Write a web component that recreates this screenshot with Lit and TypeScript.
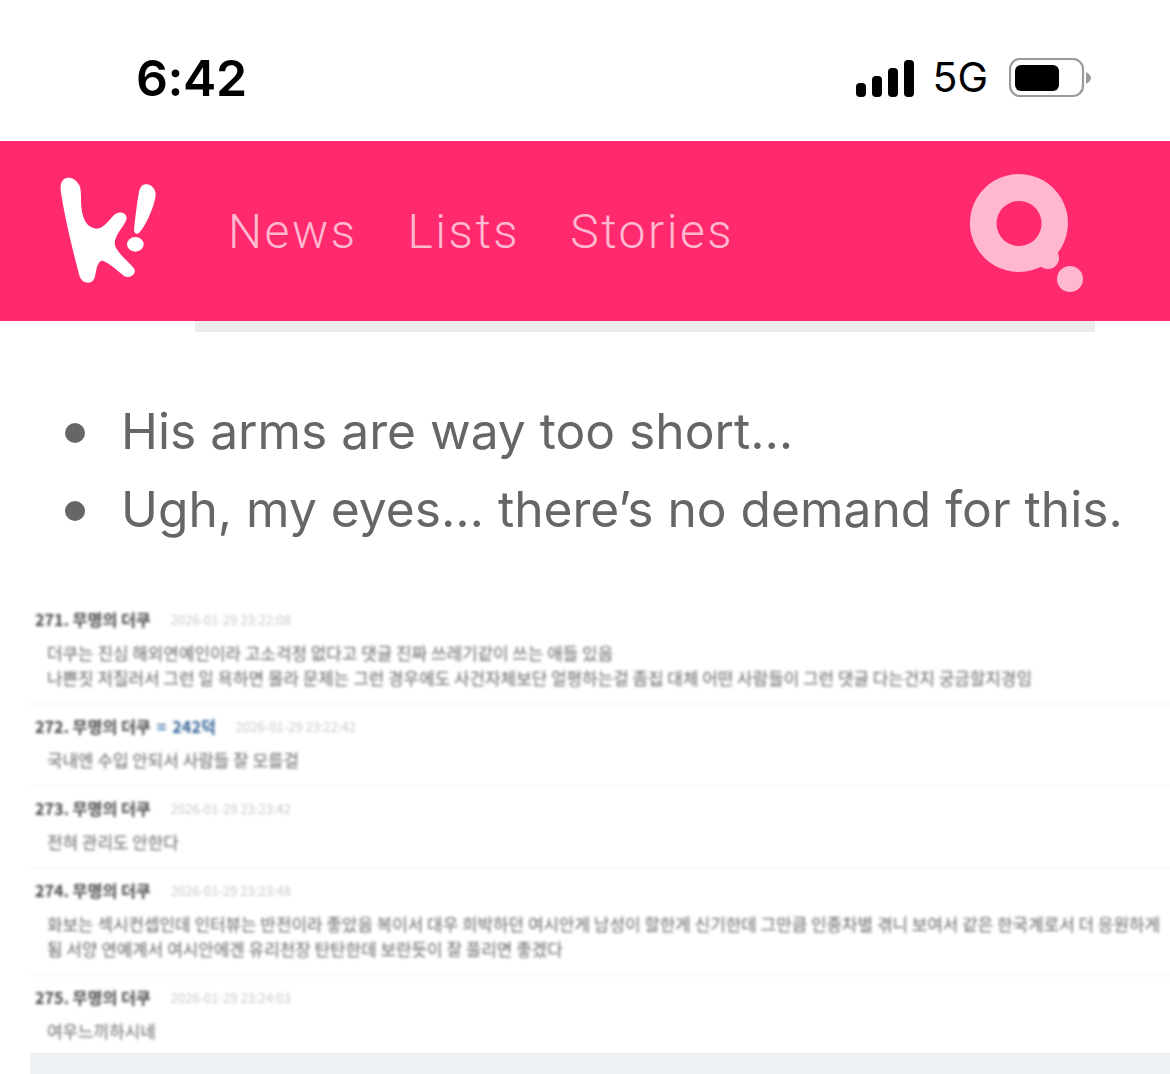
import { LitElement, html, css } from "lit";
import { customElement } from "lit/decorators.js";

interface Comment { n: string; name: string; badge?: string; date: string; lines: string[]; }

const COMMENTS: Comment[] = [
  { n: "271.", name: "무명의 더쿠", date: "2026-01-29 23:22:08", lines: [
    "더쿠는 진심 해외연예인이라 고소걱정 없다고 댓글 진짜 쓰레기같이 쓰는 애들 있음",
    "나쁜짓 저질러서 그런 일 욕하면 몰라 문제는 그런 경우에도 사건자체보단 얼평하는걸 좀집 대체 어떤 사람들이 그런 댓글 다는건지 궁금할지경임",
  ] },
  { n: "272.", name: "무명의 더쿠", badge: "242덕", date: "2026-01-29 23:22:42", lines: ["국내엔 수입 안되서 사람들 잘 모를걸"] },
  { n: "273.", name: "무명의 더쿠", date: "2026-01-29 23:23:42", lines: ["전혀 관리도 안한다"] },
  { n: "274.", name: "무명의 더쿠", date: "2026-01-29 23:23:48", lines: [
    "화보는 섹시컨셉인데 인터뷰는 반전이라 좋았음 복이서 대우 희박하던 여시안게 남성이 할한게 신기한데 그만큼 인종차별 겪니 보여서 같은 한국계로서 더 응원하게",
    "됨 서양 연예계서 여시안에겐 유리천장 탄탄한데 보란듯이 잘 풀리면 좋겠다",
  ] },
  { n: "275.", name: "무명의 더쿠", date: "2026-01-29 23:24:03", lines: ["여우느끼하시네"] },
];

@customElement("app-root")
export class AppRoot extends LitElement {
  static styles = css`
    :host { display: block; width: 1170px; height: 1074px; overflow: hidden; background: #fff; font-family: Roboto, "Liberation Sans", sans-serif; }
    .status { height: 141px; box-sizing: border-box; padding: 14px 79px 0 136px; display: flex; align-items: center; justify-content: space-between; }
    .time { font-family: Inter, Roboto, sans-serif; font-size: 50px; font-weight: 600; line-height: 1; color: #000; letter-spacing: -0.4px; }
    .sys { display: flex; align-items: center; }
    .sys svg { display: block; }
    .net { font-family: Inter, sans-serif; font-size: 41px; line-height: 1; color: #000; margin: 0 21px 0 18px; }
    header { height: 180px; background: #ff2a6d; display: flex; align-items: center; padding-left: 60px; }
    .logo { width: 100px; height: 110px; display: block; flex: none; margin-top: 2px; }
    nav { display: flex; gap: 50px; margin: 2px 0 0 68px; font-size: 48px; font-weight: 300; letter-spacing: 2.5px; color: #ffb8d0; line-height: 1; }
    .search { margin-left: auto; margin-right: 84px; width: 116px; height: 120px; flex: none; margin-top: 5px; display: block; }
    .strip { height: 11px; margin: 0 75px 0 195px; background: #ececec; }
    ul { margin: 60px 0 0; padding: 0; list-style: none; color: #666; font-family: Inter, sans-serif; font-size: 49.7px; line-height: 78px; }
    li { display: flex; align-items: center; white-space: nowrap; }
    .dot { width: 20px; height: 20px; border-radius: 50%; background: #666; margin: 4px 36px 0 65px; flex: none; }
    .comments { margin: 50px 0 0 30px; filter: blur(1.4px); font-family: "Noto Sans CJK KR", sans-serif; }
    .row { padding: 5px 0 0 5px; border-bottom: 2px solid #f8f8f8; box-sizing: border-box; }
    .row:last-child { border-bottom: 0; }
    .head { display: flex; align-items: center; height: 32px; font-size: 16.2px; font-weight: 700; color: #444; white-space: nowrap; }
    .eq { margin: 0 6px; color: #3b6fa5; }
    .badge { color: #2f5f96; }
    .date { font-size: 13px; font-weight: 400; color: #c8c8c8; margin-left: 20px; }
    .body { padding: 5px 0 13px 12px; font-size: 16.9px; line-height: 25px; color: #666; white-space: nowrap; }
    .row:last-child .body { padding-bottom: 10px; }
    .foot { height: 22px; margin-left: 30px; background: #eff2f5; border-top: 1px solid #e9ecef; box-sizing: border-box; }
  `;

  render() {
    return html`
      <div class="status">
        <div class="time">6:42</div>
        <div class="sys">
          <svg width="58" height="38" viewBox="0 0 58 38">
            <rect x="0" y="24" width="10" height="14" rx="4" fill="#000"/>
            <rect x="16" y="17" width="10" height="21" rx="4" fill="#000"/>
            <rect x="32" y="9" width="10" height="29" rx="4" fill="#000"/>
            <rect x="48" y="1" width="10" height="37" rx="4" fill="#000"/>
          </svg>
          <div class="net">5G</div>
          <svg width="82" height="40" viewBox="0 0 82 40">
            <rect x="1" y="1" width="73" height="37" rx="10" fill="none" stroke="#9a9a9a" stroke-width="2.2"/>
            <rect x="6" y="7" width="44" height="26" rx="6" fill="#000"/>
            <path d="M77 14 Q82 17 82 20 Q82 23 77 26 Z" fill="#9a9a9a"/>
          </svg>
        </div>
      </div>
      <header>
        <svg class="logo" viewBox="180 110 300 330">
          <path fill="#fff" d="M205 112 C188 112 180 128 182 150 C190 210 215 320 238 405 C244 428 268 434 280 420 C290 408 285 375 302 362 C315 358 345 385 372 407 C388 416 408 402 404 388 C395 370 350 340 344 312 C342 285 375 255 380 235 C380 218 362 210 345 222 C330 235 312 265 290 265 C262 262 248 240 244 200 C242 175 245 150 238 135 C230 120 218 112 205 112 Z"/>
          <path fill="#fff" d="M436 132 C452 130 468 145 467 165 C463 200 436 260 416 279 C408 283 402 278 402 268 C406 230 412 180 418 150 C422 138 428 133 436 132 Z"/>
          <ellipse fill="#fff" cx="406" cy="312" rx="25" ry="22"/>
        </svg>
        <nav><span>News</span><span>Lists</span><span>Stories</span></nav>
        <svg class="search" viewBox="0 0 116 120">
          <path fill="#ffb8d0" fill-rule="evenodd" d="M49 0 A49 49 0 1 1 48.9 0 Z M49 27 A22.5 22.5 0 1 0 49.1 27 Z"/>
          <circle cx="78" cy="84" r="11" fill="#ffb8d0"/>
          <circle cx="100" cy="105" r="13" fill="#ffb8d0"/>
        </svg>
      </header>
      <div class="strip"></div>
      <ul>
        <li><span class="dot"></span>His arms are way too short…</li>
        <li><span class="dot"></span>Ugh, my eyes… there’s no demand for this.</li>
      </ul>
      <div class="comments">
        ${COMMENTS.map((c) => html`
          <div class="row">
            <div class="head">
              <span>${c.n} ${c.name}</span>
              ${c.badge ? html`<span class="eq">=</span><span class="badge">${c.badge}</span>` : ""}
              <span class="date">${c.date}</span>
            </div>
            <div class="body">${c.lines.map((l) => html`<div>${l}</div>`)}</div>
          </div>
        `)}
      </div>
      <div class="foot"></div>
    `;
  }
}
